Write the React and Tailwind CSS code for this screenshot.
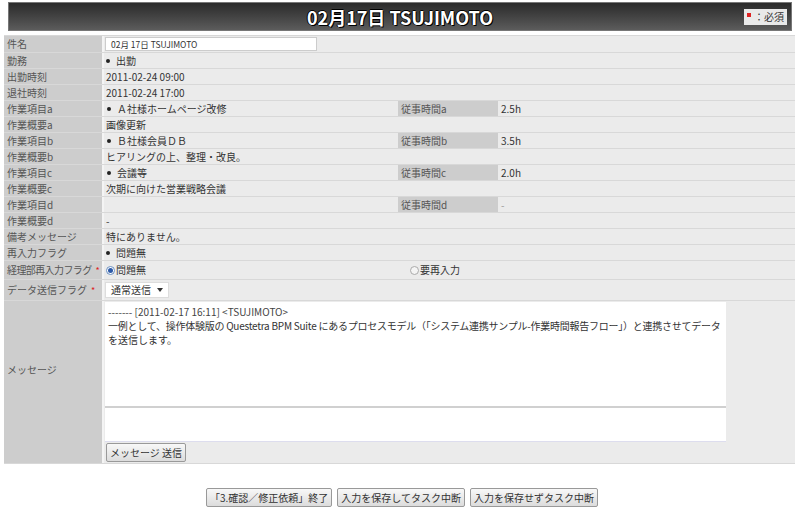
import React from 'react'

const font = { fontFamily: '"Noto Sans CJK JP", "Noto Sans", sans-serif' }

function Row({ label, children, h = 'h-[16px]', required, tight }) {
  return (
    <div className={`flex ${h} border-b border-[#d8d8d8]`}>
      <div className={`w-[98px] shrink-0 bg-[#cdcdcd] pl-[3px] flex items-center text-[#555] whitespace-nowrap overflow-hidden ${tight ? 'tracking-[-0.6px]' : ''}`}>
        {label}
        {required && <span className="text-[#d22] ml-[4px] text-[9px] tracking-normal">*</span>}
      </div>
      <div className="w-[2px] bg-[#f4f4f4]" />
      <div className="flex-1 bg-[#ebebeb] flex items-center">{children}</div>
    </div>
  )
}

function SplitRow({ label, value, label2, value2 }) {
  return (
    <Row label={label}>
      <div className="w-[294px] pl-[1px]">{value}</div>
      <div className="w-[100px] self-stretch bg-[#cdcdcd] pl-[3px] flex items-center text-[#555]">{label2}</div>
      <div className="pl-[3px]">{value2}</div>
    </Row>
  )
}

function Bullet({ children }) {
  return (
    <span className="flex items-center">
      <span className="inline-block w-[4px] h-[4px] rounded-full bg-[#222] mr-[6px] ml-[2px]" />
      {children}
    </span>
  )
}

const btn = 'h-[19px] px-[3px] border border-[#999] rounded-[2px] bg-gradient-to-b from-[#f8f8f8] to-[#dcdcdc] text-[10px] text-[#333]'

export default function App() {
  return (
    <div className="w-[800px] h-[517px] bg-white text-[10px] text-[#333] leading-none" style={font}>
      <div className="pt-[2px] px-[8px]">
        <div className="relative h-[29px] bg-gradient-to-b from-[#2b2b2b] to-[#5c5c5c] border border-[#777] flex items-center justify-center">
          <span className="text-white font-bold text-[18px]" style={{ textShadow: '1px 1px 0 #000, -1px 0 0 #000, 0 -1px 0 #000' }}>02月17日 TSUJIMOTO</span>
          <div className="absolute right-[4px] top-[6px] h-[16px] px-[3px] bg-[#e9e9e9] flex items-center text-[10px] text-[#333]">
            <span className="inline-block w-[4px] h-[4px] bg-[#d22] mr-[3px] mb-[4px]" />：必須
          </div>
        </div>
      </div>

      <div className="mt-[4px] ml-[4px] w-[791px] border-t border-[#d8d8d8]">
        <Row label="件名" h="h-[17px]">
          <div className="w-[212px] h-[14px] ml-[1px] bg-white border border-[#ccc] flex items-center pl-[5px] text-[8.5px]">02月 17日 TSUJIMOTO</div>
        </Row>
        <Row label="勤務"><Bullet>出勤</Bullet></Row>
        <Row label="出勤時刻"><span className="pl-[2px]">2011-02-24 09:00</span></Row>
        <Row label="退社時刻"><span className="pl-[2px]">2011-02-24 17:00</span></Row>
        <SplitRow label="作業項目a" value={<Bullet>Ａ社様ホームページ改修</Bullet>} label2="従事時間a" value2="2.5h" />
        <Row label="作業概要a"><span className="pl-[2px]">画像更新</span></Row>
        <SplitRow label="作業項目b" value={<Bullet>Ｂ社様会員ＤＢ</Bullet>} label2="従事時間b" value2="3.5h" />
        <Row label="作業概要b"><span className="pl-[2px]">ヒアリングの上、整理・改良。</span></Row>
        <SplitRow label="作業項目c" value={<Bullet>会議等</Bullet>} label2="従事時間c" value2="2.0h" />
        <Row label="作業概要c"><span className="pl-[2px]">次期に向けた営業戦略会議</span></Row>
        <SplitRow label="作業項目d" value="" label2="従事時間d" value2={<span className="text-[#999]">-</span>} />
        <Row label="作業概要d"><span className="pl-[2px]">-</span></Row>
        <Row label="備考メッセージ"><span className="pl-[2px]">特にありません。</span></Row>
        <Row label="再入力フラグ"><Bullet>問題無</Bullet></Row>
        <Row label="経理部再入力フラグ" required tight h="h-[19px]">
          <div className="w-[306px] flex items-center pl-[2px]">
            <span className="w-[9px] h-[9px] rounded-full border border-[#6a8fc0] bg-white flex items-center justify-center mr-[1px]">
              <span className="w-[5px] h-[5px] rounded-full bg-[#2d5aa8]" />
            </span>
            問題無
          </div>
          <div className="flex items-center">
            <span className="w-[9px] h-[9px] rounded-full border border-[#aaa] bg-[#f4f4f4] mr-[1px]" />
            要再入力
          </div>
        </Row>
        <Row label="データ送信フラグ" required h="h-[21px]">
          <div className="ml-[1px] h-[16px] px-[5px] bg-white border border-[#ddd] flex items-center gap-[6px]">
            通常送信
            <svg width="6" height="4" viewBox="0 0 6 4"><path d="M0 0h6L3 4z" fill="#333" /></svg>
          </div>
        </Row>
        <div className="flex h-[163px] border-b border-[#d8d8d8]">
          <div className="w-[98px] shrink-0 bg-[#cdcdcd] pl-[3px] pt-[64px] text-[#555]">メッセージ</div>
          <div className="w-[2px] bg-[#f4f4f4]" />
          <div className="flex-1 bg-[#ebebeb] pt-[1px] pl-[1px] flex flex-col">
            <div className="w-[621px] h-[106px] bg-white border-b-2 border-[#d0d0d0] pl-[3px] pt-[3px] leading-[14px]">
              <div className="text-[#444]">------- [2011-02-17 16:11] &lt;TSUJIMOTO&gt;</div>
              <div className="whitespace-nowrap tracking-[-0.25px]">一例として、操作体験版の Questetra BPM Suite にあるプロセスモデル（「システム連携サンプル-作業時間報告フロー」）と連携させてデータ</div>
              <div>を送信します。</div>
            </div>
            <div className="w-[621px] h-[34px] bg-white border-b border-[#dde]" />
            <div className="mt-[1px] ml-[1px]">
              <button className={btn}>メッセージ 送信</button>
            </div>
          </div>
        </div>
      </div>

      <div className="mt-[24px] flex justify-center gap-[5px] pl-[4px]">
        <button className={btn}>「3.確認／修正依頼」終了</button>
        <button className={btn}>入力を保存してタスク中断</button>
        <button className={btn}>入力を保存せずタスク中断</button>
      </div>
    </div>
  )
}
